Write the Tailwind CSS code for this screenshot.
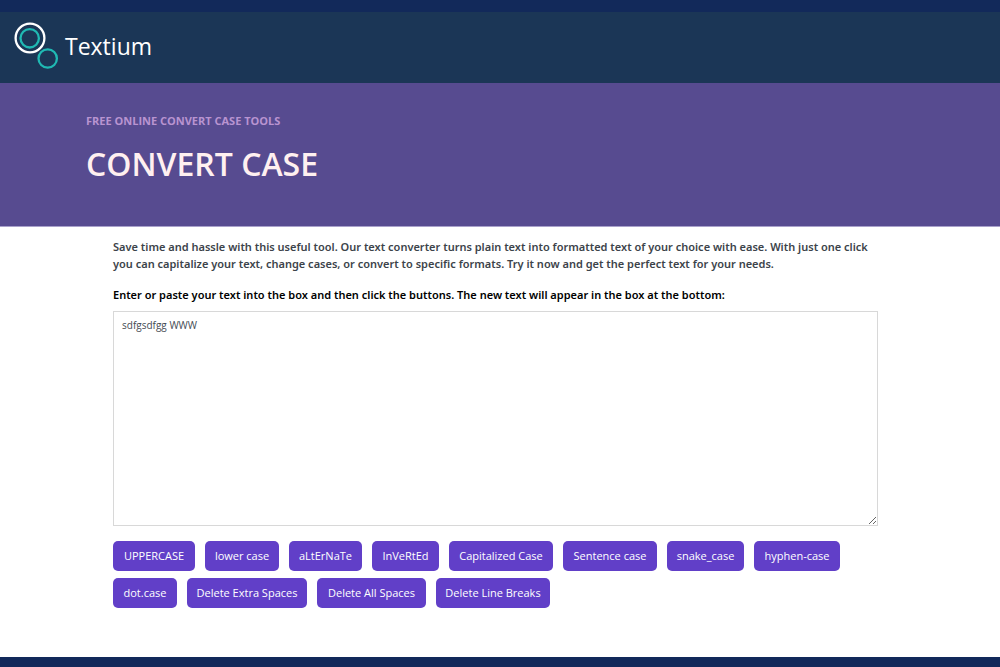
<!DOCTYPE html>
<html lang="en">
<head>
<meta charset="utf-8">
<meta name="viewport" content="width=device-width, initial-scale=1">
<title>Textium</title>
<script src="https://cdn.jsdelivr.net/npm/@tailwindcss/browser@4"></script>
</head>
<body class="flex min-h-screen flex-col border-t-12 border-b-10 border-[#12295a] bg-white font-['Segoe_UI','Open_Sans',sans-serif]">
  <header class="flex h-[71px] items-start bg-[#1b3656] px-3 pt-2.5">
    <a href="#" class="flex items-start gap-[5px] text-white">
      <svg class="h-12 w-12" viewBox="0 0 48 48" fill="none" stroke-width="2.3" aria-hidden="true">
        <circle cx="18" cy="16" r="14.4" stroke="#fff"/>
        <circle cx="17.7" cy="16.3" r="9.2" stroke="#20b9b3"/>
        <circle cx="35.7" cy="36.5" r="9.2" stroke="#20b9b3"/>
      </svg>
      <span class="pt-2 font-['Open_Sans',sans-serif] text-[23px] leading-8">Textium</span>
    </a>
  </header>
  <section class="h-[144px] border-b border-[#a9a1cb] bg-[#574b90] px-[86px] pt-7">
    <p class="text-[11px] leading-5 font-bold text-[#b994d0]">FREE ONLINE CONVERT CASE TOOLS</p>
    <h1 class="mt-2 text-[32px] leading-[50px] font-semibold text-[#fff0f0]">CONVERT CASE</h1>
  </section>
  <main class="flex-1 pt-[11px] pr-[122px] pl-[113px]">
    <p class="font-['Noto_Sans',sans-serif] text-[11px] leading-[17px] font-semibold text-[#3c434a]">Save time and hassle with this useful tool. Our text converter turns plain text into formatted text of your choice with ease. With just one click you can capitalize your text, change cases, or convert to specific formats. Try it now and get the perfect text for your needs.</p>
    <label for="source" class="mt-3.5 block font-['Noto_Sans',sans-serif] text-[11px] leading-[18px] font-semibold text-black">Enter or paste your text into the box and then click the buttons. The new text will appear in the box at the bottom:</label>
    <textarea id="source" spellcheck="false" class="mt-[7px] block h-[215px] w-full resize border border-[#d8d8d8] bg-white px-2 py-[5px] text-[10px] leading-4 text-[#444b52] outline-none">sdfgsdfgg WWW</textarea>
    <div class="mt-[15px] flex flex-wrap gap-x-2.5 gap-y-[7px] text-[11px] leading-[18px] whitespace-nowrap text-white">
      <button type="button" class="w-[82px] rounded-[5px] bg-[#613fc8] py-1.5">UPPERCASE</button>
      <button type="button" class="w-[74px] rounded-[5px] bg-[#613fc8] py-1.5">lower case</button>
      <button type="button" class="w-[73px] rounded-[5px] bg-[#613fc8] py-1.5">aLtErNaTe</button>
      <button type="button" class="w-[67px] rounded-[5px] bg-[#613fc8] py-1.5">InVeRtEd</button>
      <button type="button" class="w-[104px] rounded-[5px] bg-[#613fc8] py-1.5">Capitalized Case</button>
      <button type="button" class="w-[94px] rounded-[5px] bg-[#613fc8] py-1.5">Sentence case</button>
      <button type="button" class="w-[77px] rounded-[5px] bg-[#613fc8] py-1.5">snake_case</button>
      <button type="button" class="w-[86px] rounded-[5px] bg-[#613fc8] py-1.5">hyphen-case</button>
      <button type="button" class="w-[64px] rounded-[5px] bg-[#613fc8] py-1.5">dot.case</button>
      <button type="button" class="w-[120px] rounded-[5px] bg-[#613fc8] py-1.5">Delete Extra Spaces</button>
      <button type="button" class="w-[109px] rounded-[5px] bg-[#613fc8] py-1.5">Delete All Spaces</button>
      <button type="button" class="w-[114px] rounded-[5px] bg-[#613fc8] py-1.5">Delete Line Breaks</button>
    </div>
  </main>
</body>
</html>
